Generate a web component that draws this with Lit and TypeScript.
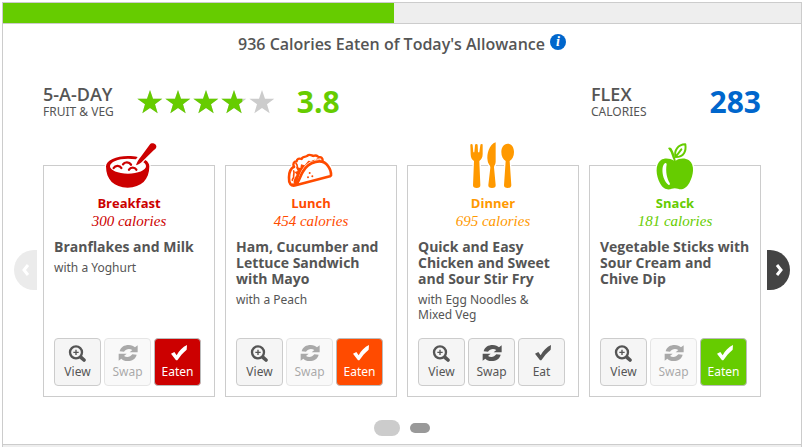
import { LitElement, html, css, svg, nothing } from "lit";
import { customElement, property } from "lit/decorators.js";
import { classMap } from "lit/directives/class-map.js";

type MealKind = "breakfast" | "lunch" | "dinner" | "snack";

interface Meal {
  kind: MealKind;
  name: string;
  calories: number;
  title: string;
  side?: string;
  eaten: boolean;
}

const MEALS: Meal[] = [
  { kind: "breakfast", name: "Breakfast", calories: 300, title: "Branflakes and Milk", side: "with a Yoghurt", eaten: true },
  { kind: "lunch", name: "Lunch", calories: 454, title: "Ham, Cucumber and Lettuce Sandwich with Mayo", side: "with a Peach", eaten: true },
  { kind: "dinner", name: "Dinner", calories: 695, title: "Quick and Easy Chicken and Sweet and Sour Stir Fry", side: "with Egg Noodles & Mixed Veg", eaten: false },
  { kind: "snack", name: "Snack", calories: 181, title: "Vegetable Sticks with Sour Cream and Chive Dip", eaten: true },
];

const MEAL_ICONS = {
  breakfast: svg`
    <path class="halo" d="M198 94C198 76 228 63 264 63C275 63 284 64 293 66L328 28C336 20 353 28 348 39L318 76C325 81 328 88 328 94C328 134 304 158 263 158C222 158 198 134 198 94Z"/>
    <path class="fill" d="M198 94C198 76 228 63 264 63C275 63 285 64 293 66L288 73C280 72 272 71 264 71C234 71 210 81 210 94C210 106 234 116 264 116C294 116 318 106 318 94C318 89 315 85 310 82L316 75C324 80 328 87 328 94C328 134 304 158 263 158C222 158 198 134 198 94Z"/>
    <path class="fill" d="M288 91C291 81 295 74 302 66L329 29C336 19 354 28 348 39C346 42 344 43 341 46L309 77C303 84 297 88 288 91Z"/>
    <path class="line" stroke-width="7" d="M221 99C226 90 240 91 244 99M249 88C254 80 268 80 273 89M267 104C272 96 284 96 289 104"/>`,
  lunch: svg`
    <path class="halo" d="M202 151C195 137 197 111 209 98L221 73L243 65L263 57L300 66L305 77C323 84 332 104 331 119Q331 126 324 128L222 155Q208 158 202 151Z"/>
    <path class="shell" stroke-width="8" d="M213 149C229 153 232 128 242 111C260 78 302 69 318 93C325 103 328 111 327 121L324 124L221 151C207 155 200 145 201 127C201 112 205 101 216 95"/>
    <path class="line" stroke-width="7" d="M216 96C211 88 216 78 224 79C224 72 232 69 239 72C242 63 252 66 255 63C263 56 267 61 274 63C284 58 287 65 291 67C298 65 302 70 302 76"/>
    <path class="fill" d="M303 76C279 66 255 82 241 103C229 121 231 139 219 147C211 143 216 131 224 119L218 111L227 108L222 96L235 99L237 88L248 91L259 77L273 79L286 70Z"/>
    <path class="line" stroke-width="5" d="M215 108C218 113 214 118 215 125C216 129 211 130 211 136M222 85C228 91 225 96 227 101"/>
    <circle class="fill" cx="263" cy="114" r="3"/><circle class="fill" cx="258" cy="127" r="3"/><circle class="fill" cx="271" cy="124" r="3"/>`,
  dinner: svg`
    <path class="halo fill" d="M199 31Q199 27 202 27Q206 27 206 31L208 52H211L213 31Q213 27 217 27Q221 27 221 31L222 52H226L229 31Q229 27 233 27Q237 27 236 31V57C236 68 232 74 226 78L229 151Q229 159 218 159Q207 159 207 151L210 78C203 74 200 67 200 58Z"/>
    <path class="halo fill" d="M275 22V80C275 89 270 91 270 97L275 150Q276 159 264 159Q252 159 253 150L259 98C260 91 252 87 251 77C247 57 256 28 275 22Z"/>
    <path class="halo fill" d="M311 26C323 26 330 37 330 51C330 64 325 73 317 78L322 151Q322 159 311 159Q300 159 300 151L305 78C297 73 292 64 292 51C292 37 299 26 311 26Z"/>`,
  snack: svg`
    <path class="halo fill" d="M264 77C253 70 236 67 225 75C206 89 210 121 222 145C233 166 249 165 257 161Q266 158 276 161C286 165 299 163 310 144C322 122 328 91 309 76C296 67 279 70 269 77C268 67 262 49 256 40Q252 36 246 39Q255 49 260 68Z"/>
    <path class="line" stroke-width="6" d="M269 66C263 46 276 29 298 28C301 48 294 66 269 66ZM271 63L286 43"/>
    <path fill="#fff" d="M238 84C225 89 226 132 247 149C251 151 253 148 251 144C243 132 238 109 242 88Q242 84 238 84Z"/>`,
};

const ACTION_ICONS = {
  view: svg`<svg class="glyph" viewBox="204 312 60 54" aria-hidden="true">
    <circle cx="228" cy="337" r="18" fill="none" stroke="currentColor" stroke-width="7"/>
    <path d="M228 329V345M220 337H236" fill="none" stroke="currentColor" stroke-width="4"/>
    <path d="M243 352L252 360" stroke="currentColor" stroke-width="11" stroke-linecap="round"/></svg>`,
  swap: svg`<svg class="glyph" viewBox="352 312 60 54" aria-hidden="true">
    <path fill="currentColor" d="M357 334C360 321 371 315 384 315C393 315 399 318 403 322L411 316V337H387L395 330C386 325 376 327 370 335Z"/>
    <path fill="currentColor" d="M408 344C405 357 394 363 381 363C372 363 366 360 362 356L354 362V341H378L370 348C379 353 389 351 395 343Z"/></svg>`,
  tick: svg`<svg class="glyph" viewBox="502 312 60 54" aria-hidden="true">
    <path fill="currentColor" d="M511 341L521 336L528 346C535 332 546 321 559 315L558 329C547 338 537 350 530 361H526Z"/></svg>`,
};

@customElement("star-rating")
class StarRating extends LitElement {
  @property({ type: Number }) value = 0;

  static styles = css`
    :host { display: block; }
    .stars { display: flex; gap: 2px; }
    .star { display: block; width: 26px; height: 24px; }
    .empty { fill: #ccc; }
    .full { fill: #6c0; }
  `;

  render() {
    const points = "39,0 48,26 76,26 54,43 62,70 39,54 16,70 24,43 1,26 30,26";
    return html`<div class="stars" role="img" aria-label="${this.value} out of 5">
      ${[0, 1, 2, 3, 4].map((i) => {
        const part = Math.max(0, Math.min(1, this.value - i));
        const clip = `part-${i}`;
        return html`<svg class="star" viewBox="0 0 78 72">
          <clipPath id=${clip}><rect width=${part * 80} height="72"></rect></clipPath>
          <polygon class="empty" points=${points}></polygon>
          <polygon class="full" points=${points} clip-path="url(#${clip})"></polygon>
        </svg>`;
      })}
    </div>`;
  }
}

@customElement("meal-card")
class MealCard extends LitElement {
  @property({ attribute: false }) meal!: Meal;

  static styles = css`
    :host { display: block; }
    .card {
      box-sizing: border-box; height: 100%; min-height: 232px; padding: 0 10px 10px;
      border: 1px solid #ccc; display: flex; flex-direction: column; color: #555;
    }
    .breakfast { --accent: #c00; }
    .lunch { --accent: #ff4b00; }
    .dinner { --accent: #f90; }
    .snack { --accent: #6c0; }
    .icon { display: block; width: 56px; height: 48px; margin: -25px auto 0; overflow: visible; }
    .fill { fill: var(--accent); }
    .halo { stroke: #fff; stroke-width: 8px; paint-order: stroke; }
    .halo:not(.fill) { fill: #fff; }
    .line { fill: none; stroke: var(--accent); stroke-linecap: round; stroke-linejoin: round; }
    .shell { fill: #fff; stroke: var(--accent); stroke-linecap: round; stroke-linejoin: round; }
    .name { margin: 5px 0 0; text-align: center; font-size: 13px; line-height: 18px; font-weight: 700; color: var(--accent); }
    .calories {
      margin: 0; text-align: center; color: var(--accent);
      font: italic 15px/18px "Liberation Serif", cursive;
    }
    .title { margin: 9px 0 0; font-size: 14px; line-height: 16px; font-weight: 700; }
    .side { margin: 5px 0 0; padding-right: 10px; font-family: "Noto Sans", sans-serif; font-size: 12px; line-height: 15px; }
    .actions { margin-top: auto; display: flex; gap: 3px; }
    .action {
      box-sizing: border-box; width: 47px; height: 48px; padding: 5px 0 0; border: 1px solid #ccc; border-radius: 4px;
      background: #f5f5f5; color: #555; font: 12px/16px "Noto Sans", sans-serif;
      display: flex; flex-direction: column; align-items: center; gap: 2px; cursor: pointer;
    }
    .action:disabled { opacity: 0.5; cursor: default; }
    .eaten { background: var(--accent); color: #fff; border-color: #bbb; }
    .glyph { display: block; width: 20px; height: 18px; }
  `;

  render() {
    const m = this.meal;
    return html`<article class="card ${m.kind}">
      <svg class="icon" viewBox="183 18 168 144" aria-hidden="true">${MEAL_ICONS[m.kind]}</svg>
      <h2 class="name">${m.name}</h2>
      <p class="calories">${m.calories} calories</p>
      <h3 class="title">${m.title}</h3>
      ${m.side ? html`<p class="side">${m.side}</p>` : nothing}
      <div class="actions">
        <button class="action" type="button">${ACTION_ICONS.view}View</button>
        <button class="action" type="button" ?disabled=${m.eaten}>${ACTION_ICONS.swap}Swap</button>
        <button class=${classMap({ action: true, eaten: m.eaten })} type="button">${ACTION_ICONS.tick}${m.eaten ? "Eaten" : "Eat"}</button>
      </div>
    </article>`;
  }
}

@customElement("app-root")
class AppRoot extends LitElement {
  @property({ type: Number }) progress = 49;

  static styles = css`
    :host { display: block; padding: 2px 3px 0 2px; background: #fff; font-family: "Open Sans", sans-serif; color: #555; }
    .panel { border: 1px solid #ccc; border-bottom: 0; }
    .track { height: 20px; background: #eee; border-bottom: 1px solid #ccc; }
    .bar { height: 100%; background: #6c0; }
    .summary { display: flex; justify-content: center; gap: 5px; padding-top: 10px; }
    .heading { margin: 0; font-size: 16px; line-height: 20px; font-weight: 600; }
    .info {
      width: 16px; height: 16px; margin: 0; padding: 0; border: 0; border-radius: 50%; background: #06c; color: #fff;
      font: italic bold 14px/16px "Liberation Serif", serif; cursor: pointer;
    }
    .stats { display: flex; align-items: center; padding: 26px 40px 0; height: 44px; }
    .label { margin: 0; font-size: 18px; line-height: 20px; font-weight: 600; }
    .sub { margin: 0; font-family: "Noto Sans", sans-serif; font-size: 12px; line-height: 16px; }
    .stars { margin-left: 23px; }
    .score { margin-left: 22px; font-size: 30px; line-height: 40px; font-weight: 700; color: #6c0; }
    .flex { margin-left: auto; width: 170px; display: flex; justify-content: space-between; align-items: center; }
    .flex-value { font-size: 30px; line-height: 40px; font-weight: 700; color: #06c; }
    .carousel { display: flex; align-items: flex-start; gap: 6px; padding: 41px 11px 0; }
    .cards { flex: 1; display: grid; grid-template-columns: repeat(4, 1fr); gap: 10px; }
    .nav { width: 23px; height: 40px; margin: 85px 0 0; padding: 0; border: 0; background: #444; color: #fff; cursor: pointer; display: grid; place-items: center; }
    .prev { border-radius: 20px 0 0 20px; background: #ebebeb; }
    .next { border-radius: 0 20px 20px 0; }
    .chevron { width: 10px; height: 12px; fill: none; stroke: currentColor; stroke-width: 3px; }
    .pager { display: flex; align-items: center; justify-content: center; gap: 10px; padding: 23px 0 8px; }
    .dot { width: 20px; height: 10px; padding: 0; border: 0; border-radius: 8px; background: #999; cursor: pointer; }
    .current { width: 26px; height: 16px; background: #ccc; }
    .footer { height: 2px; background: #eee; border-top: 1px solid #ccc; }
  `;

  render() {
    return html`<main class="panel">
      <div class="track" role="progressbar" aria-valuenow=${this.progress} aria-label="Calories eaten">
        <div class="bar" style="width: ${this.progress}%"></div>
      </div>
      <header class="summary">
        <h1 class="heading">936 Calories Eaten of Today's Allowance</h1>
        <button class="info" type="button" aria-label="Information">i</button>
      </header>
      <section class="stats">
        <div>
          <p class="label">5-A-DAY</p>
          <p class="sub">FRUIT &amp; VEG</p>
        </div>
        <star-rating class="stars" .value=${3.8}></star-rating>
        <strong class="score">3.8</strong>
        <div class="flex">
          <div>
            <p class="label">FLEX</p>
            <p class="sub">CALORIES</p>
          </div>
          <strong class="flex-value">283</strong>
        </div>
      </section>
      <section class="carousel">
        <button class="nav prev" type="button" aria-label="Previous">
          <svg class="chevron" viewBox="0 0 10 12"><path d="M7 1L3 6L7 11"></path></svg>
        </button>
        <div class="cards">${MEALS.map((meal) => html`<meal-card .meal=${meal}></meal-card>`)}</div>
        <button class="nav next" type="button" aria-label="Next">
          <svg class="chevron" viewBox="0 0 10 12"><path d="M3 1L7 6L3 11"></path></svg>
        </button>
      </section>
      <nav class="pager" aria-label="Pages">
        <button class="dot current" type="button" aria-label="Page 1"></button>
        <button class="dot" type="button" aria-label="Page 2"></button>
      </nav>
      <div class="footer"></div>
    </main>`;
  }
}
